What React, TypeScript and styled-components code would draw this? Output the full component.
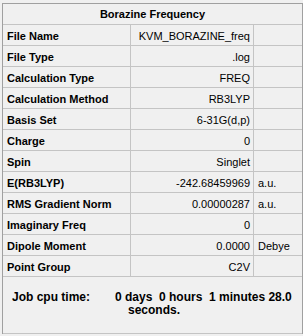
import React from 'react';
import styled, { createGlobalStyle } from 'styled-components';

const GlobalStyle = createGlobalStyle`
  html, body {
    margin: 0;
    padding: 0;
    background: #ffffff;
  }
  body {
    font-family: "Liberation Sans", Arial, sans-serif;
    font-size: 11px;
    color: #000000;
  }
`;

type Row = { label: string; value: string; unit?: string };

const rows: Row[] = [
  { label: 'File Name', value: 'KVM_BORAZINE_freq' },
  { label: 'File Type', value: '.log' },
  { label: 'Calculation Type', value: 'FREQ' },
  { label: 'Calculation Method', value: 'RB3LYP' },
  { label: 'Basis Set', value: '6-31G(d,p)' },
  { label: 'Charge', value: '0' },
  { label: 'Spin', value: 'Singlet' },
  { label: 'E(RB3LYP)', value: '-242.68459969', unit: 'a.u.' },
  { label: 'RMS Gradient Norm', value: '0.00000287', unit: 'a.u.' },
  { label: 'Imaginary Freq', value: '0' },
  { label: 'Dipole Moment', value: '0.0000', unit: 'Debye' },
  { label: 'Point Group', value: 'C2V' },
];

const App = () => {
  return (
    <>
      <GlobalStyle />
      <Window>
        <Panel>
          <Title>Borazine Frequency</Title>
          {rows.map((row) => (
            <DataRow key={row.label}>
              <Label>{row.label}</Label>
              <Value>{row.value}</Value>
              <Unit>{row.unit}</Unit>
            </DataRow>
          ))}
          <JobInfo>
            <JobLabel>Job cpu time:</JobLabel>
            <JobValue>
              <span>0 days  0 hours  1 minutes 28.0</span>
              <Wrapped>seconds.</Wrapped>
            </JobValue>
          </JobInfo>
        </Panel>
      </Window>
    </>
  );
};

const Window = styled.div`
  width: 303px;
  height: 336px;
  background: #f0f0f0;
  padding: 3px 0 0 2px;
  box-sizing: border-box;
`;

const Panel = styled.div`
  width: 301px;
  box-sizing: border-box;
  border: 1px solid #a0a0a0;
  border-bottom: none;
`;

const Title = styled.div`
  height: 20px;
  line-height: 20px;
  text-align: center;
  font-weight: bold;
  border-bottom: 1px solid #c4c4c4;
`;

const DataRow = styled.div`
  display: grid;
  grid-template-columns: 128px 123px 48px;
  height: 21px;
  border-bottom: 1px solid #c4c4c4;
  box-sizing: border-box;
`;

const Cell = styled.div`
  line-height: 20px;
  padding-top: 1px;
  height: 20px;
  box-sizing: border-box;
  white-space: nowrap;
  overflow: hidden;
`;

const Label = styled(Cell)`
  font-weight: bold;
  padding-left: 4px;
  border-right: 1px solid #c4c4c4;
`;

const Value = styled(Cell)`
  text-align: right;
  padding-right: 3px;
  border-right: 1px solid #c4c4c4;
`;

const Unit = styled(Cell)`
  padding-left: 4px;
`;

const JobInfo = styled.div`
  display: grid;
  grid-template-columns: 103px 1fr;
  height: 57px;
  box-sizing: border-box;
  padding: 14px 0 0 9px;
  border-bottom: 1px solid #c4c4c4;
  font-weight: bold;
  font-size: 12px;
  line-height: 13px;
`;

const JobLabel = styled.div``;

const JobValue = styled.div`
  display: flex;
  flex-direction: column;
  white-space: pre;
`;

const Wrapped = styled.span`
  padding-left: 13px;
`;

export default App;
